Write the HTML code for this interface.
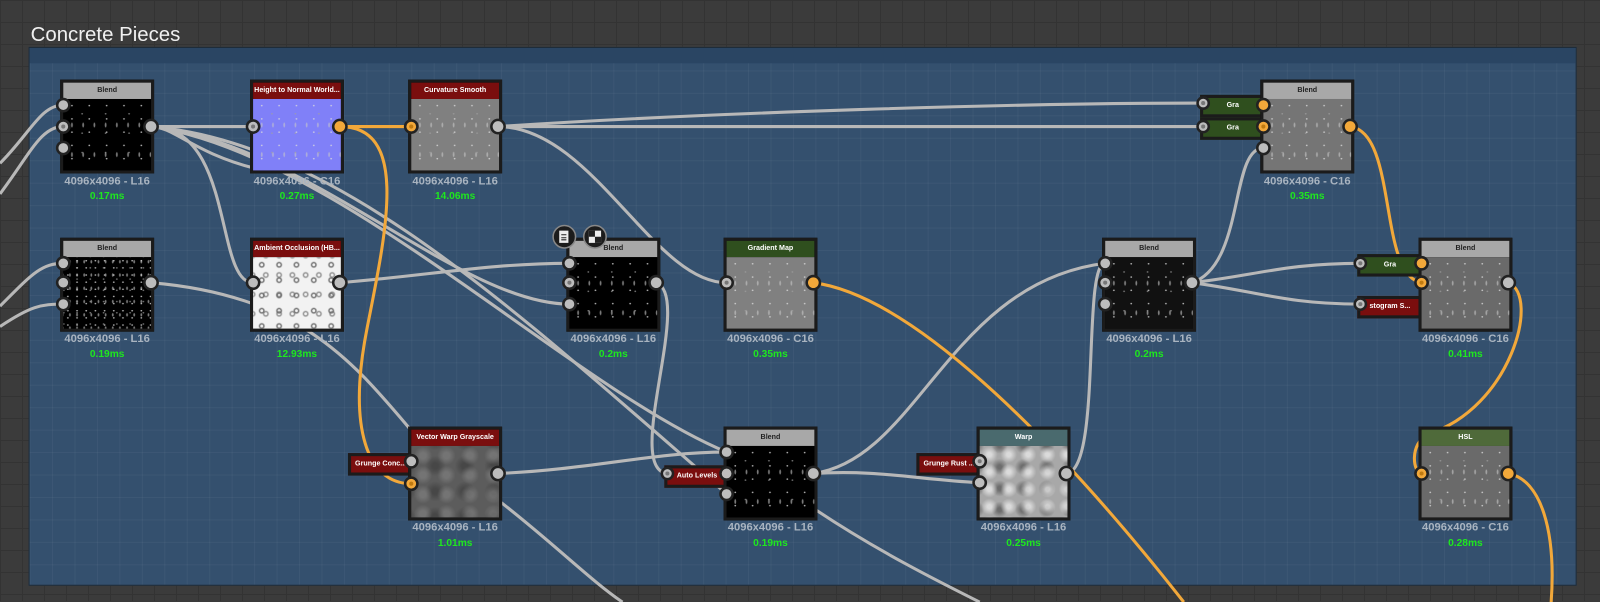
<!DOCTYPE html>
<html><head><meta charset="utf-8"><style>
html,body{margin:0;padding:0;width:1600px;height:601px;overflow:hidden;background:#3a3a3a;font-family:"Liberation Sans",sans-serif}
#bg{position:absolute;left:0;top:0;width:1600px;height:601px;background-color:#3b3b3b;
background-image:linear-gradient(#333 1px,transparent 1px),linear-gradient(90deg,#333 1px,transparent 1px);background-size:22px 22px}
#w{position:absolute;left:0;top:0;width:1568px;height:590px;transform:scale(1.0205);transform-origin:0 0}
#frame{position:absolute;left:28px;top:46px;width:1515px;height:526px;background-color:#34506e;border:1px solid #1e2a36;
background-image:linear-gradient(rgba(255,255,255,.04) 1px,transparent 1px),linear-gradient(90deg,rgba(255,255,255,.04) 1px,transparent 1px);background-size:22px 22px}
#fh{position:absolute;left:0;top:0;right:0;height:15px;background:#2a4563}
#title{position:absolute;left:30px;top:23px;color:#f0f0f0;font-size:20px}
.n{position:absolute;width:86px;height:86px;border:3px solid #1b1b1b;background:#000}
.h{height:16px;font-size:7px;font-weight:bold;color:#fff;text-align:center;line-height:16px;white-space:nowrap;overflow:hidden}
.img{height:70px;background-image:radial-gradient(rgba(220,220,220,.8) 0.7px,transparent 1.1px),radial-gradient(rgba(160,160,160,.7) 0.7px,transparent 1.1px),radial-gradient(rgba(200,200,200,.6) 0.7px,transparent 1.1px);background-size:17px 13px,23px 19px,11px 29px;background-position:0 0,7px 5px,3px 11px}
.lab{position:absolute;width:120px;text-align:center;font-size:11px;font-weight:bold;color:#a9b4c0}
.t{position:absolute;width:120px;text-align:center;font-size:10px;font-weight:bold;color:#1ee81e}
.s{position:absolute;height:16px;border:3px solid #1b1b1b;font-size:7px;font-weight:bold;color:#fff;line-height:16px;text-align:center;white-space:nowrap;overflow:hidden}
svg{position:absolute;left:0;top:0}
</style></head><body>
<div id="bg"></div>
<div id="w">
<div id="title">Concrete Pieces</div>
<div id="frame"><div id="fh"></div></div>
<svg width="1568" height="590" viewBox="0 0 1568 590">
<g fill="none" stroke="#b8b8b8" stroke-width="3">
<path d="M0 160 C30 130 40 103 62 103"/>
<path d="M0 190 C30 150 40 124 62 124"/>
<path d="M0 300 C30 270 40 258 62 258"/>
<path d="M0 320 C30 300 40 298 62 298"/>
<path d="M148 124 L248 124"/>
<path d="M148 124 C230 124 210 277 248 277"/>
<path d="M148 124 C300 140 450 298 558 298"/>
<path d="M148 124 C330 150 560 380 712 443"/>
<path d="M148 124 C330 140 500 300 712 484"/>
<path d="M148 124 C170 124 190 150 250 165"/>
<path d="M488 124 C700 110 1000 101 1179 101"/>
<path d="M488 124 L1179 124"/>
<path d="M488 124 C580 124 640 277 712 277"/>
<path d="M148 277 C300 290 350 360 410 430"/>
<path d="M333 277 C420 270 480 258 558 258"/>
<path d="M643 277 C680 290 610 460 654 464"/>
<path d="M488 464 C580 460 640 443 712 443"/>
<path d="M488 490 C540 530 580 570 610 590"/>
<path d="M797 464 C860 460 900 470 960 473"/>
<path d="M797 464 C900 450 930 277 1083 258"/>
<path d="M800 500 C860 540 920 570 960 590"/>
<path d="M1045 464 C1080 460 1060 258 1083 258"/>
<path d="M1168 277 C1230 270 1260 258 1333 258"/>
<path d="M1168 277 C1230 285 1260 298 1333 298"/>
<path d="M1168 277 C1220 260 1205 145 1238 145"/>
</g>
<g fill="none" stroke="#f2a83a" stroke-width="3">
<path d="M333 124 L403 124"/>
<path d="M333 124 C400 124 380 220 360 320 C340 420 360 474 403 474"/>
<path d="M797 277 C900 290 1050 450 1160 590"/>
<path d="M1323 124 C1370 130 1350 270 1393 277"/>
<path d="M1478 277 C1510 290 1480 400 1400 425 C1380 435 1385 464 1393 464"/>
<path d="M1478 464 C1510 470 1525 520 1520 590"/>
</g>
</svg>

<div class="s" style="left:1176px;top:93px;width:58px;background:#2f4f1e">Gra</div>
<div class="s" style="left:1176px;top:115px;width:58px;background:#2f4f1e">Gra</div>
<div class="s" style="left:1330px;top:249px;width:58px;background:#2f4f1e">Gra</div>
<div class="s" style="left:1330px;top:290px;width:58px;background:#7a0e0e">stogram S...</div>
<div class="s" style="left:341px;top:444px;width:58px;background:#7a0e0e">Grunge Conc...</div>
<div class="s" style="left:651px;top:456px;width:58px;background:#7a0e0e">Auto Levels</div>
<div class="s" style="left:898px;top:444px;width:58px;background:#7a0e0e">Grunge Rust ...</div>

<div class="n" style="left:59px;top:78px"><div class="h" style="background:#a8a8a8;color:#222">Blend</div><div class="img" style="background-color:#000"></div></div>
<div class="n" style="left:245px;top:78px"><div class="h" style="background:#7a0e0e">Height to Normal World...</div><div class="img" style="background-color:#8080f8"></div></div>
<div class="n" style="left:400px;top:78px"><div class="h" style="background:#7a0e0e">Curvature Smooth</div><div class="img" style="background-color:#808080"></div></div>
<div class="n" style="left:1235px;top:78px"><div class="h" style="background:#a8a8a8;color:#222">Blend</div><div class="img" style="background-color:#757575"></div></div>

<div class="n" style="left:59px;top:233px"><div class="h" style="background:#a8a8a8;color:#222">Blend</div><div class="img" style="background-color:#000;background-size:9px 7px,13px 11px,7px 13px"></div></div>
<div class="n" style="left:245px;top:233px"><div class="h" style="background:#7a0e0e">Ambient Occlusion (HB...</div><div class="img" style="background-color:#f2f2f2;background-image:radial-gradient(circle,transparent 1px,#666 2px,transparent 3.5px),radial-gradient(circle,transparent 1px,#888 2px,transparent 3.5px);background-size:17px 15px,13px 19px;background-position:0 0,6px 8px"></div></div>
<div class="n" style="left:555px;top:233px"><div class="h" style="background:#a8a8a8;color:#222">Blend</div><div class="img" style="background-color:#000"></div></div>
<div class="n" style="left:709px;top:233px"><div class="h" style="background:#2f4f1e">Gradient Map</div><div class="img" style="background-color:#808080"></div></div>
<div class="n" style="left:1080px;top:233px"><div class="h" style="background:#a8a8a8;color:#222">Blend</div><div class="img" style="background-color:#111"></div></div>
<div class="n" style="left:1390px;top:233px"><div class="h" style="background:#a8a8a8;color:#222">Blend</div><div class="img" style="background-color:#6a6a6a"></div></div>

<div class="n" style="left:400px;top:418px"><div class="h" style="background:#7a0e0e">Vector Warp Grayscale</div><div class="img" style="background-color:#5c5c5c;background-image:radial-gradient(circle,rgba(140,140,140,.5) 3px,transparent 9px),radial-gradient(circle,rgba(50,50,50,.5) 3px,transparent 10px);background-size:23px 19px,29px 25px;background-position:0 0,9px 7px"></div></div>
<div class="n" style="left:709px;top:418px"><div class="h" style="background:#a8a8a8;color:#222">Blend</div><div class="img" style="background-color:#000"></div></div>
<div class="n" style="left:957px;top:418px"><div class="h" style="background:#4a6a6e">Warp</div><div class="img" style="background-color:#a8a8a8;background-image:radial-gradient(circle,rgba(240,240,240,.7) 2px,transparent 8px),radial-gradient(circle,rgba(70,70,70,.6) 2px,transparent 8px);background-size:19px 17px,23px 21px;background-position:0 0,8px 10px"></div></div>
<div class="n" style="left:1390px;top:418px"><div class="h" style="background:#4f6a3a">HSL</div><div class="img" style="background-color:#6a6a6a"></div></div>

<div class="lab" style="left:45px;top:172px">4096x4096 - L16</div><div class="t" style="left:45px;top:187px">0.17ms</div>
<div class="lab" style="left:231px;top:172px">4096x4096 - C16</div><div class="t" style="left:231px;top:187px">0.27ms</div>
<div class="lab" style="left:386px;top:172px">4096x4096 - L16</div><div class="t" style="left:386px;top:187px">14.06ms</div>
<div class="lab" style="left:1221px;top:172px">4096x4096 - C16</div><div class="t" style="left:1221px;top:187px">0.35ms</div>
<div class="lab" style="left:45px;top:326px">4096x4096 - L16</div><div class="t" style="left:45px;top:342px">0.19ms</div>
<div class="lab" style="left:231px;top:326px">4096x4096 - L16</div><div class="t" style="left:231px;top:342px">12.93ms</div>
<div class="lab" style="left:541px;top:326px">4096x4096 - L16</div><div class="t" style="left:541px;top:342px">0.2ms</div>
<div class="lab" style="left:695px;top:326px">4096x4096 - C16</div><div class="t" style="left:695px;top:342px">0.35ms</div>
<div class="lab" style="left:1066px;top:326px">4096x4096 - L16</div><div class="t" style="left:1066px;top:342px">0.2ms</div>
<div class="lab" style="left:1376px;top:326px">4096x4096 - C16</div><div class="t" style="left:1376px;top:342px">0.41ms</div>
<div class="lab" style="left:386px;top:511px">4096x4096 - L16</div><div class="t" style="left:386px;top:527px">1.01ms</div>
<div class="lab" style="left:695px;top:511px">4096x4096 - L16</div><div class="t" style="left:695px;top:527px">0.19ms</div>
<div class="lab" style="left:943px;top:511px">4096x4096 - L16</div><div class="t" style="left:943px;top:527px">0.25ms</div>
<div class="lab" style="left:1376px;top:511px">4096x4096 - C16</div><div class="t" style="left:1376px;top:527px">0.28ms</div>

<svg width="1568" height="590" viewBox="0 0 1568 590">
<g stroke="#222" stroke-width="2.5">
<g fill="#bdbdbd">
<circle cx="62" cy="103" r="6"/><circle cx="62" cy="124" r="6"/><circle cx="62" cy="145" r="6"/><circle cx="148" cy="124" r="6.5"/>
<circle cx="248" cy="124" r="6"/><circle cx="488" cy="124" r="6.5"/>
<circle cx="62" cy="258" r="6"/><circle cx="62" cy="277" r="6"/><circle cx="62" cy="298" r="6"/><circle cx="148" cy="277" r="6.5"/>
<circle cx="248" cy="277" r="6"/><circle cx="333" cy="277" r="6.5"/>
<circle cx="558" cy="258" r="6"/><circle cx="558" cy="277" r="6"/><circle cx="558" cy="298" r="6"/><circle cx="643" cy="277" r="6.5"/>
<circle cx="712" cy="277" r="6"/>
<circle cx="1083" cy="258" r="6"/><circle cx="1083" cy="277" r="6"/><circle cx="1083" cy="298" r="6"/><circle cx="1168" cy="277" r="6.5"/>
<circle cx="1238" cy="145" r="6"/><circle cx="1478" cy="277" r="6.5"/>
<circle cx="403" cy="452" r="6"/><circle cx="488" cy="464" r="6.5"/>
<circle cx="712" cy="443" r="6"/><circle cx="712" cy="464" r="6"/><circle cx="712" cy="484" r="6"/><circle cx="797" cy="464" r="6.5"/>
<circle cx="960" cy="452" r="6"/><circle cx="960" cy="473" r="6"/><circle cx="1045" cy="464" r="6.5"/>
<circle cx="1179" cy="101" r="5.5"/><circle cx="1179" cy="124" r="5.5"/><circle cx="1333" cy="258" r="5.5"/><circle cx="1333" cy="298" r="5.5"/>
<circle cx="654" cy="464" r="5.5"/>
</g>
<g fill="#f2a83a">
<circle cx="333" cy="124" r="6.5"/><circle cx="403" cy="124" r="6"/><circle cx="403" cy="474" r="6"/><circle cx="797" cy="277" r="6.5"/>
<circle cx="1238" cy="103" r="6"/><circle cx="1238" cy="124" r="6"/><circle cx="1323" cy="124" r="6.5"/>
<circle cx="1393" cy="258" r="6"/><circle cx="1393" cy="277" r="6"/>
<circle cx="1393" cy="464" r="6"/><circle cx="1478" cy="464" r="6.5"/>
</g>
</g>
<g fill="#777"><circle cx="62" cy="124" r="2"/><circle cx="248" cy="124" r="2"/><circle cx="558" cy="277" r="2"/><circle cx="712" cy="277" r="2"/><circle cx="1083" cy="277" r="2"/><circle cx="960" cy="452" r="2"/><circle cx="654" cy="464" r="2"/><circle cx="1179" cy="101" r="2"/><circle cx="1179" cy="124" r="2"/><circle cx="1333" cy="258" r="2"/><circle cx="1333" cy="298" r="2"/></g>
<g fill="#c07a10"><circle cx="403" cy="124" r="2"/><circle cx="403" cy="474" r="2"/><circle cx="1238" cy="124" r="2"/><circle cx="1393" cy="277" r="2"/><circle cx="1393" cy="464" r="2"/></g>
<circle cx="553" cy="232" r="11" fill="#1c1c1c" stroke="#888" stroke-width="1.5"/>
<rect x="548" y="226" width="9" height="12" fill="#eee"/><path d="M550 230h5M550 233h5M550 235h5" stroke="#222"/>
<circle cx="583" cy="232" r="11" fill="#1c1c1c" stroke="#888" stroke-width="1.5"/>
<rect x="577" y="226" width="12" height="12" fill="#eee"/><rect x="577" y="226" width="6" height="6" fill="#222"/><rect x="583" y="232" width="6" height="6" fill="#222"/>
</svg>
</div>
</body></html>
